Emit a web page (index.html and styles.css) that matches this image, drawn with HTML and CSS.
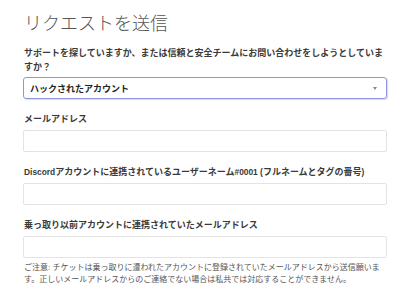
FILE: index.html
```html
<!DOCTYPE html>
<html lang="ja">
<head>
<meta charset="utf-8">
<link rel="stylesheet" href="styles.css">
</head>
<body>
<main class="page">
  <h1 class="title">リクエストを送信</h1>
  <div class="field field-first">
    <label class="label">サポートを探していますか、または信頼と安全チームにお問い合わせをしようとしていますか？</label>
    <div class="select">
      <span class="select-value">ハックされたアカウント</span>
      <span class="select-arrow"></span>
    </div>
  </div>
  <div class="field">
    <label class="label">メールアドレス</label>
    <div class="input"></div>
  </div>
  <div class="field">
    <label class="label"><span class="latin">Discord</span>アカウントに連携されているユーザーネーム<span class="latin">#0001 (</span>フルネームとタグの番号<span class="latin">)</span></label>
    <div class="input"></div>
  </div>
  <div class="field">
    <label class="label">乗っ取り以前アカウントに連携されていたメールアドレス</label>
    <div class="input"></div>
    <p class="note">ご注意: チケットは乗っ取りに遭われたアカウントに登録されていたメールアドレスから送信願います。正しいメールアドレスからのご連絡でない場合は私共では対応することができません。</p>
  </div>
</main>
</body>
</html>
```

FILE: styles.css
```css
html, body {
  margin: 0;
  padding: 0;
  background: #ffffff;
}
body {
  font-family: "Liberation Sans", "Noto Sans CJK JP", sans-serif;
  color: #2f2f2f;
  overflow: hidden;
}
.page {
  padding: 8px 13px 0 23px;
}
.title {
  margin: 0 0 10px 1px;
  font-family: "Noto Sans CJK JP", sans-serif;
  font-size: 18px;
  line-height: 28px;
  font-weight: 300;
  color: #555555;
}
.field {
  display: flex;
  flex-direction: column;
  margin-top: 13px;
}
.field-first {
  margin-top: 0;
}
.label {
  display: block;
  font-size: 9px;
  line-height: 14px;
  font-weight: 700;
  color: #3a3a3a;
  margin: 0 0 3px 1px;
}
.latin {
  font-size: 8.4px;
}
.select {
  display: flex;
  align-items: center;
  justify-content: space-between;
  height: 20px;
  border: 1px solid #8f97dc;
  border-radius: 3px;
  padding: 0 7px 0 6px;
  box-shadow: 1px 1px 1px rgba(140, 150, 220, 0.35);
}
.select-value {
  font-size: 9px;
  font-weight: 700;
  color: #222222;
}
.select-arrow {
  width: 0;
  height: 0;
  margin-right: 2px;
  border-left: 2px solid transparent;
  border-right: 2px solid transparent;
  border-top: 3px solid #888888;
}
.input {
  height: 20px;
  border: 1px solid #e3e3e3;
  border-radius: 2px;
  margin-top: 1px;
}
.note {
  margin: 4px 0 0 1px;
  padding-right: 4px;
  font-size: 8px;
  line-height: 12px;
  color: #555555;
}
```
